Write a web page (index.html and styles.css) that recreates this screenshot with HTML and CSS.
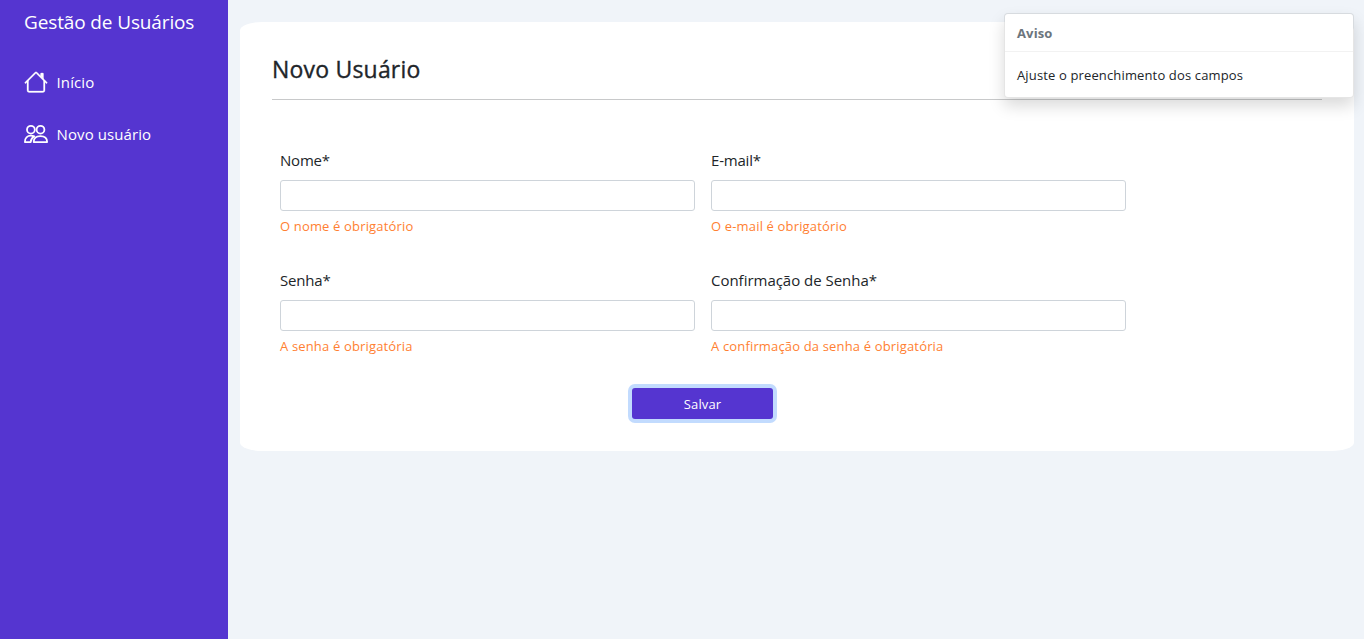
FILE: index.html
```html
<!DOCTYPE html>
<html lang="pt-BR">
<head>
<meta charset="utf-8">
<title>Gestão de Usuários</title>
<link rel="stylesheet" href="styles.css">
</head>
<body>
<div class="layout">
  <aside class="sidebar">
    <div class="brand">Gestão de Usuários</div>
    <nav class="menu">
      <a class="menu-item">
        <svg class="icon house" viewBox="0 0 16 16" fill="currentColor"><path d="M2 13.5V7h1v6.5a.5.5 0 0 0 .5.5h9a.5.5 0 0 0 .5-.5V7h1v6.5a1.5 1.5 0 0 1-1.5 1.5h-9A1.5 1.5 0 0 1 2 13.5zm11-11V6l-2-2V2.5a.5.5 0 0 1 .5-.5h1a.5.5 0 0 1 .5.5z"/><path d="M7.293 1.5a1 1 0 0 1 1.414 0l6.647 6.646a.5.5 0 0 1-.708.708L8 2.207 1.354 8.854a.5.5 0 1 1-.708-.708L7.293 1.5z"/></svg>
        <span>Início</span>
      </a>
      <a class="menu-item">
        <svg class="icon" viewBox="0 0 24 24" fill="none" stroke="currentColor" stroke-width="1.8"><circle cx="6.9" cy="7.7" r="3.9"/><circle cx="16.5" cy="7.7" r="3.9"/><path d="M9.700 20.100c0-3.800 2.700-5.900 6.700-5.900s6.700 2.100 6.700 5.900z" stroke-linejoin="round"/><path d="M10.300 14.300c-1-.4-2.200-.6-3.400-.6-3.600 0-6 2.400-6 6.400h5.800c0-2.500 1.400-4.400 3.600-5.800z" stroke-linejoin="round"/></svg>
        <span>Novo usuário</span>
      </a>
    </nav>
  </aside>
  <main class="content">
    <section class="card">
      <h1 class="title">Novo Usuário</h1>
      <form class="form">
        <div class="field"><label class="label short">Nome*</label><input class="input"><small class="error">O nome é obrigatório</small></div>
        <div class="field"><label class="label short">E-mail*</label><input class="input"><small class="error">O e-mail é obrigatório</small></div>
        <div class="field"><label class="label short">Senha*</label><input class="input"><small class="error">A senha é obrigatória</small></div>
        <div class="field"><label class="label">Confirmação de Senha*</label><input class="input"><small class="error">A confirmação da senha é obrigatória</small></div>
        <button class="save" type="button">Salvar</button>
      </form>
    </section>
  </main>
</div>
<div class="toast">
  <div class="toast-header">Aviso</div>
  <div class="toast-body">Ajuste o preenchimento dos campos</div>
</div>
</body>
</html>
```
FILE: styles.css
```css
* { box-sizing: border-box; }
body {
  margin: 0;
  background: #f0f4f9;
  color: #212529;
  font-family: "Open Sans", "Noto Sans", sans-serif;
  font-size: 15px;
  line-height: 24px;
  white-space: nowrap;
  overflow: hidden;
}
.layout { display: flex; height: 639px; }
.sidebar { width: 228px; padding: 7px 24px; background: #5535d0; color: #fff; }
.brand { height: 30px; line-height: 30px; font-size: 19px; letter-spacing: -0.13px; }
.menu { display: flex; flex-direction: column; gap: 28px; margin-top: 33px; }
.menu-item { display: flex; align-items: center; gap: 8.6px; height: 24px; color: #fff; letter-spacing: .08px; }
.icon { width: 24px; height: 24px; flex: none; }
.house { stroke: currentColor; stroke-width: .2; }
.content { flex: 1; padding: 22px 10px 0 12px; }
.card { height: 429px; padding: 32px; background: #fff; border-radius: 2%; }
.title {
  margin: 0;
  height: 46px;
  border-bottom: 1px solid #c8c9ca;
  font-size: 23px;
  font-weight: 500;
  line-height: 30px;
  letter-spacing: .2px;
  -webkit-text-stroke: .35px currentColor;
}
.form {
  display: grid;
  grid-template-columns: 415px 415px;
  grid-template-rows: 91px 91px;
  column-gap: 16px;
  row-gap: 29px;
  padding: 48px 8px 0;
}
.field { display: flex; flex-direction: column; }
.label { height: 32px; letter-spacing: -.02px; }
.short { letter-spacing: -.2px; }
.input { width: 100%; height: 31px; border: 1px solid #ced4da; border-radius: 3px; background: #fff; }
.error { margin-top: 3px; height: 24px; font-size: 13px; letter-spacing: .16px; color: #ff7f32; }
.save {
  grid-column: 1 / 3;
  justify-self: center;
  width: 141px;
  height: 31px;
  margin: 0 2px 0 0;
  padding: 0 0 0 1px;
  border: 0;
  border-radius: 3px;
  background: #5535d0;
  box-shadow: 0 0 0 4px #c2dbfe;
  color: #fff;
  font: 13px/32px "Open Sans", "Noto Sans", sans-serif;
  letter-spacing: .1px;
}
.toast {
  position: absolute;
  top: 13px;
  left: 1004px;
  width: 350px;
  height: 85px;
  border: 1px solid rgba(0, 0, 0, .1);
  border-radius: 4px;
  background: rgba(255, 255, 255, .97);
  background-clip: padding-box;
  box-shadow: 0 8px 16px rgba(0, 0, 0, .15);
  font-size: 13px;
  letter-spacing: .14px;
}
.toast-header {
  height: 38px;
  padding: 0 12px;
  border-bottom: 1px solid rgba(0, 0, 0, .05);
  color: #6c757d;
  font-weight: 700;
  line-height: 38px;
}
.toast-body { padding: 0 12px; line-height: 47px; }
```
